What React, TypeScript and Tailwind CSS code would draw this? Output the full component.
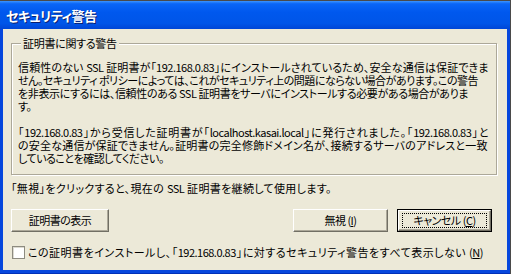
const jp = "font-['Noto_Sans_CJK_JP',sans-serif] [font-feature-settings:'palt']";
const just = "whitespace-nowrap tracking-[-0.5px] [text-align-last:justify] text-justify";

function Btn({
  children,
  width,
  isDefault,
}: {
  children: React.ReactNode;
  width: string;
  isDefault?: boolean;
}) {
  if (isDefault) {
    return (
      <div className={`${width} h-[23px] shrink-0 border border-black`}>
        <div className="flex h-full w-full items-center justify-center border border-t-white border-l-white border-r-[#716f64] border-b-[#716f64] bg-[#ece9d8] shadow-[inset_-1px_-1px_0_#aca899]">
          <div className="flex h-[15px] w-[calc(100%-6px)] items-center justify-center border border-dotted border-black">
            {children}
          </div>
        </div>
      </div>
    );
  }
  return (
    <div
      className={`${width} flex h-[23px] shrink-0 items-center justify-center border border-t-white border-l-white border-r-[#716f64] border-b-[#716f64] bg-[#ece9d8] shadow-[inset_-1px_-1px_0_#aca899]`}
    >
      {children}
    </div>
  );
}

export default function App() {
  const p1: [string, string][] = [
    ["信頼性のない SSL 証明書が「192.168.0.83」にインストールされているため、安全な通信は保証できま", "w-[470px]"],
    ["せん。セキュリティ ポリシーによっては、これがセキュリティ上の問題にならない場合があります。この警告", "w-[460px]"],
    ["を非表示にするには、信頼性のある SSL 証明書をサーバにインストールする必要がある場合がありま", "w-[450px]"],
  ];
  const p2: [string, string][] = [
    ["「192.168.0.83」から受信した証明書が「localhost.kasai.local」に発行されました。「192.168.0.83」と", "w-[470px]"],
    ["の安全な通信が保証できません。証明書の完全修飾ドメイン名が、接続するサーバのアドレスと一致", "w-[469px]"],
  ];

  return (
    <div
      className={`flex h-[274px] w-[511px] flex-col overflow-hidden border-t border-r border-[#4a4a4a] bg-[#0647dd] text-[11px] leading-[13px] text-black ${jp}`}
    >
      {/* title bar */}
      <div className="flex h-[28px] shrink-0 items-center bg-[linear-gradient(180deg,#3d95ff_0%,#0a66f7_10%,#0058ee_40%,#0055e8_80%,#0046d6_100%)] pl-[6px]">
        <span className="text-[13px] font-bold tracking-[-0.5px] text-white [text-shadow:1px_1px_#0a1e6e]">
          セキュリティ警告
        </span>
      </div>

      <div className="flex min-w-0 flex-1 border-b border-[#0030b8] pr-[3px] pl-[3px] pb-[3px]">
        <div className="flex min-w-0 flex-1 flex-col overflow-hidden bg-[#ece9d8]">
          {/* group box */}
          <div className="relative mt-[14px] ml-[8px] mr-[10px] border border-[#aca899] pt-[17px] pr-[4px] pb-[9px] pl-[6px] shadow-[inset_1px_1px_0_#fff,1px_1px_0_#fff]">
            <span className="absolute -top-[7px] left-[9px] bg-[#ece9d8] px-[2px] tracking-[-0.3px]">
              証明書に関する警告
            </span>
            {p1.map(([l, w]) => (
              <div key={l} className={`h-[13px] ${w} ${just}`}>
                {l}
              </div>
            ))}
            <div className="h-[13px] whitespace-nowrap tracking-[-0.5px]">す。</div>
            <div className="h-[13px]" />
            {p2.map(([l, w]) => (
              <div key={l} className={`h-[13px] ${w} ${just}`}>
                {l}
              </div>
            ))}
            <div className="h-[13px] whitespace-nowrap tracking-[-0.5px]">
              していることを確認してください。
            </div>
          </div>

          <div className={`mt-[7px] ml-[8px] h-[13px] w-[320px] ${just}`}>
            「無視」をクリックすると、現在の SSL 証明書を継続して使用します。
          </div>

          <div className="mt-[14px] flex items-center pl-[8px] pr-[15px]">
            <Btn width="w-[98px]">
              <span className="tracking-[-0.5px]">証明書の表示</span>
            </Btn>
            <div className="flex-1" />
            <Btn width="w-[95px]">
              <span className="tracking-[-0.5px]">
                無視 (<u>I</u>)
              </span>
            </Btn>
            <div className="w-[9px]" />
            <Btn width="w-[95px]" isDefault>
              <span className="tracking-[-0.5px]">
                キャンセル (<u>C</u>)
              </span>
            </Btn>
          </div>

          <div className="mt-[14px] flex items-center pl-[9px]">
            <div className="h-[13px] w-[13px] shrink-0 border border-[#8d8b80] bg-white shadow-[inset_1px_1px_0_#dcdad0]" />
            <span className={`ml-[3px] h-[13px] w-[455px] ${just}`}>
              この証明書をインストールし、「192.168.0.83」に対するセキュリティ警告をすべて表示しない (<u>N</u>)
            </span>
          </div>
        </div>
      </div>
    </div>
  );
}
